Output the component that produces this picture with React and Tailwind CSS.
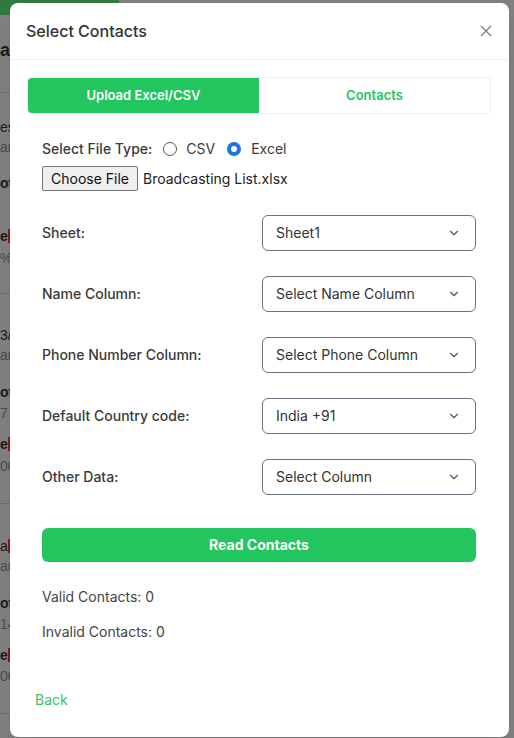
import React, { useState } from 'react';

const fields = [
  { label: 'Sheet:', value: 'Sheet1' },
  { label: 'Name Column:', value: 'Select Name Column' },
  { label: 'Phone Number Column:', value: 'Select Phone Column' },
  { label: 'Default Country code:', value: 'India +91' },
  { label: 'Other Data:', value: 'Select Column' },
];

// the slice of the page that peeks out left of the modal
const peek = [
  { t: 'a', cls: 'text-[#1a1a1a] font-bold text-lg', mt: 'mt-[40px]' },
  { line: true, mt: 'mt-[32px]' },
  { t: 'es', cls: 'text-[#1a1a1a] text-sm', mt: 'mt-[24px]' },
  { t: 'an', cls: 'text-[#4a4a4a] text-sm', mt: 'mt-0' },
  { t: 'ot', cls: 'text-[#1a1a1a] text-sm font-semibold', mt: 'mt-[16px]' },
  { t: 'e', cls: 'text-[#1a1a1a] text-sm font-semibold', mt: 'mt-[33px]', red: true },
  { t: '%', cls: 'text-[#4a4a4a] text-sm', mt: 'mt-[2px]' },
  { line: true, mt: 'mt-[25px]' },
  { t: '3/', cls: 'text-[#1a1a1a] text-sm', mt: 'mt-[31px]' },
  { t: 'an', cls: 'text-[#4a4a4a] text-sm', mt: 'mt-0' },
  { t: 'ot', cls: 'text-[#1a1a1a] text-sm font-semibold', mt: 'mt-[17px]' },
  { t: '7', cls: 'text-[#4a4a4a] text-sm', mt: 'mt-[1px]' },
  { t: 'e', cls: 'text-[#1a1a1a] text-sm font-semibold', mt: 'mt-[11px]', red: true },
  { t: '00', cls: 'text-[#4a4a4a] text-sm', mt: 'mt-[2px]' },
  { line: true, mt: 'mt-[27px]' },
  { t: 'a', cls: 'text-[#1a1a1a] text-sm', mt: 'mt-[32px]', red: true },
  { t: 'an', cls: 'text-[#4a4a4a] text-sm', mt: 'mt-0' },
  { t: 'ot', cls: 'text-[#1a1a1a] text-sm font-semibold', mt: 'mt-[17px]' },
  { t: '14', cls: 'text-[#4a4a4a] text-sm', mt: 'mt-[1px]' },
  { t: 'e', cls: 'text-[#1a1a1a] text-sm font-semibold', mt: 'mt-[11px]', red: true },
  { t: '00', cls: 'text-[#4a4a4a] text-sm', mt: 'mt-[1px]' },
  { line: true, mt: 'mt-[27px]' },
];

const Chevron = () => (
  <svg width="14" height="14" viewBox="0 0 24 24" fill="none" stroke="#4b5563" strokeWidth="2" strokeLinecap="round" strokeLinejoin="round">
    <path d="m6 9 6 6 6-6" />
  </svg>
);

const App = () => {
  const [tab, setTab] = useState('upload');
  const [fileType, setFileType] = useState('excel');

  return (
    <div className="relative w-[514px] h-[738px] overflow-hidden bg-[#808080] font-['Inter',sans-serif]">
      {/* Page behind the overlay */}
      <div className="absolute left-0 top-0 w-[119px] h-[15px] bg-[#2f7a40]" />
      <div className="flex flex-col items-start w-[10px] font-['Liberation_Sans',sans-serif]">
        {peek.map((p, i) =>
          p.line ? (
            <div key={i} className={`${p.mt} w-[10px] h-px bg-[#6e6e6e]`} />
          ) : (
            <div key={i} className={`${p.mt} flex items-center whitespace-nowrap leading-5 h-5 ${p.cls}`}>
              <span>{p.t}</span>
              {p.red && <span className="w-[2px] h-[14px] bg-[#8a1a10]" />}
            </div>
          )
        )}
      </div>

      {/* Modal */}
      <div className="absolute left-[10px] top-[3px] w-[499px] h-[734px] bg-white rounded-lg shadow-lg flex flex-col">
        <div className="flex items-center justify-between h-[57px] pl-4 pr-[17px] border-b border-[#f0f0f0]">
          <h2 className="text-base font-medium text-[#333]">Select Contacts</h2>
          <button className="text-[#777]">
            <svg width="12" height="12" viewBox="0 0 12 12" stroke="currentColor" strokeWidth="1.1">
              <path d="M1 1l10 10M11 1 1 11" />
            </svg>
          </button>
        </div>

        <div className="pl-[17px] pr-[18px] pt-[17px]">
          <div className="flex h-[37px] rounded border border-[#f0f0f0] text-[13px] font-semibold">
            <button
              onClick={() => setTab('upload')}
              className={`flex-1 rounded-l ${tab === 'upload' ? 'bg-[#22c55e] text-white' : 'text-[#22c55e]'}`}
            >
              Upload Excel/CSV
            </button>
            <button
              onClick={() => setTab('contacts')}
              className={`flex-1 rounded-r ${tab === 'contacts' ? 'bg-[#22c55e] text-white' : 'text-[#22c55e]'}`}
            >
              Contacts
            </button>
          </div>
        </div>

        <div className="pl-8 pr-[33px] pt-[24px] text-sm text-[#3a3a3a]">
          <div className="flex items-center h-[21px] font-medium">
            <span>Select File Type:</span>
            <label className="flex items-center ml-[11px] font-normal">
              <span
                onClick={() => setFileType('csv')}
                className={`w-[14px] h-[14px] rounded-full ${fileType === 'csv' ? 'border-[4px] border-[#1a73e8]' : 'border border-[#555]'}`}
              />
              <span className="ml-[9px]">CSV</span>
            </label>
            <label className="flex items-center ml-[12px] font-normal">
              <span
                onClick={() => setFileType('excel')}
                className={`w-[14px] h-[14px] rounded-full ${fileType === 'excel' ? 'border-[4px] border-[#1a73e8]' : 'border border-[#555]'}`}
              />
              <span className="ml-[10px]">Excel</span>
            </label>
          </div>
          <div className="flex items-center mt-[7px]">
            <button className="h-[25px] px-[8px] bg-[#efefef] border border-[#767676] rounded-[2px] text-[#111]">
              Choose File
            </button>
            <span className="ml-[5px] text-[#222]">Broadcasting List.xlsx</span>
          </div>

          <div className="flex flex-col gap-[25px] mt-[24px]">
            {fields.map((f) => (
              <div key={f.label} className="flex items-center justify-between h-[36px]">
                <span className="font-medium">{f.label}</span>
                <div className="w-[214px] h-[36px] border border-[#6b7280] rounded-md flex items-center justify-between pl-[13px] pr-[14px] text-[#333]">
                  <span>{f.value}</span>
                  <Chevron />
                </div>
              </div>
            ))}
          </div>

          <button className="mt-[33px] w-full h-[34px] rounded-md bg-[#22c55e] text-white font-bold">
            Read Contacts
          </button>

          <p className="mt-[25px] text-[#444]">Valid Contacts: 0</p>
          <p className="mt-[15px] text-[#444]">Invalid Contacts: 0</p>
        </div>

        <div className="px-[25px] mt-[45px]">
          <button className="text-sm text-[#3cc15f]">Back</button>
        </div>
      </div>
    </div>
  );
};

export default App;
